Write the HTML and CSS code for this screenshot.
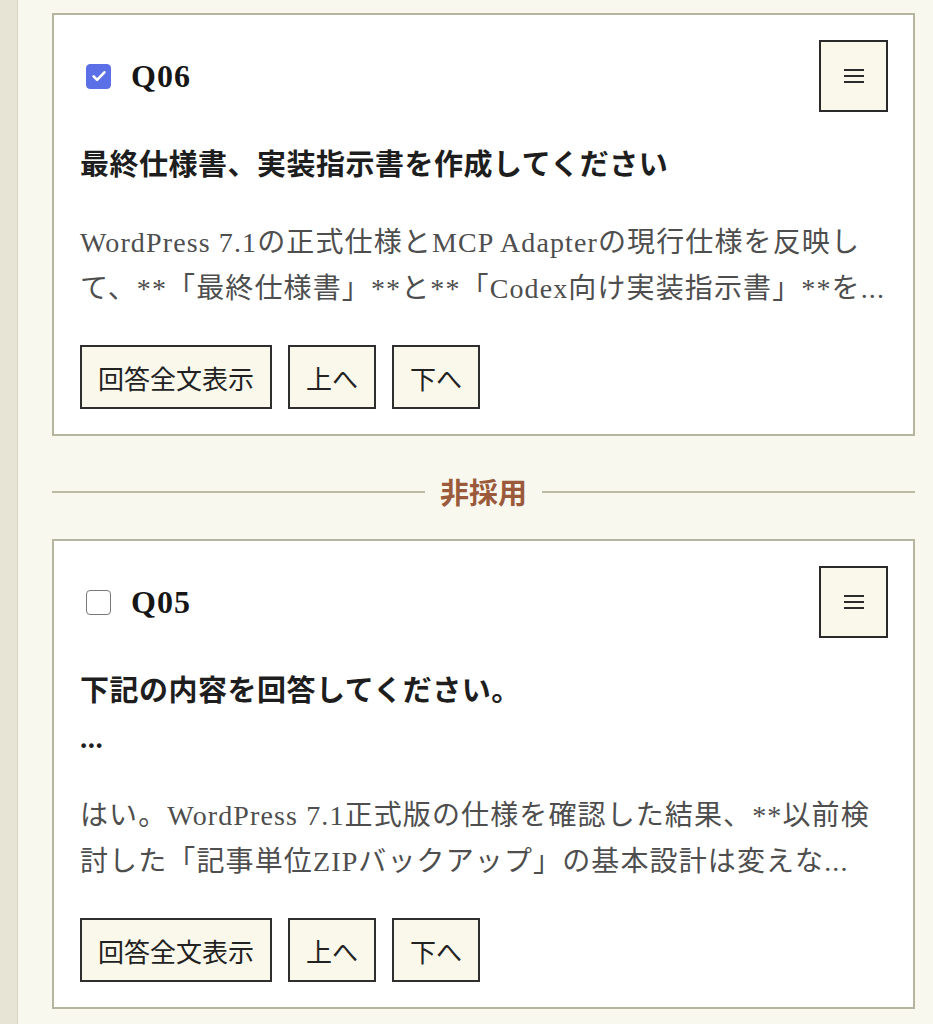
FILE: index.html
```html
<!DOCTYPE html>
<html lang="ja">
<head>
<meta charset="utf-8">
<title>質問一覧</title>
<link rel="stylesheet" href="styles.css">
</head>
<body>
<div class="layout">
  <aside class="rail"></aside>
  <main class="list">
    <article class="qa-card">
      <header class="qa-head">
        <label class="qa-id">
          <input class="pick" type="checkbox" checked>
          <span class="qa-num">Q06</span>
        </label>
        <button class="menu-btn" type="button" aria-label="メニュー">
          <svg width="20" height="14" viewBox="0 0 20 14"><path d="M0 1h20M0 7h20M0 13h20" stroke="#2b2b2b" stroke-width="2" fill="none"/></svg>
        </button>
      </header>
      <h2 class="qa-title">最終仕様書、実装指示書を作成してください</h2>
      <p class="qa-excerpt">WordPress 7.1の正式仕様とMCP Adapterの現行仕様を反映し<br>て、**「最終仕様書」**と**「Codex向け実装指示書」**を...</p>
      <div class="qa-actions">
        <button class="act" type="button">回答全文表示</button>
        <button class="act" type="button">上へ</button>
        <button class="act" type="button">下へ</button>
      </div>
    </article>

    <div class="divider"><span>非採用</span></div>

    <article class="qa-card">
      <header class="qa-head">
        <label class="qa-id">
          <input class="pick" type="checkbox">
          <span class="qa-num">Q05</span>
        </label>
        <button class="menu-btn" type="button" aria-label="メニュー">
          <svg width="20" height="14" viewBox="0 0 20 14"><path d="M0 1h20M0 7h20M0 13h20" stroke="#2b2b2b" stroke-width="2" fill="none"/></svg>
        </button>
      </header>
      <h2 class="qa-title">下記の内容を回答してください。<br>...</h2>
      <p class="qa-excerpt">はい。WordPress 7.1正式版の仕様を確認した結果、**以前検<br>討した「記事単位ZIPバックアップ」の基本設計は変えな...</p>
      <div class="qa-actions">
        <button class="act" type="button">回答全文表示</button>
        <button class="act" type="button">上へ</button>
        <button class="act" type="button">下へ</button>
      </div>
    </article>
  </main>
</div>
</body>
</html>
```

FILE: styles.css
```css
* {
  box-sizing: border-box;
}

html, body {
  margin: 0;
  padding: 0;
}

body {
  background: #f9f8ee;
  font-family: "Liberation Serif", "Noto Sans CJK JP", serif;
  color: #1c1c1c;
}

.layout {
  display: flex;
  min-height: 1024px;
}

.rail {
  flex: 0 0 18px;
  background: #e8e4d5;
  border-right: 1px solid #d8d4c1;
}

.list {
  flex: 1;
  min-width: 0;
  padding: 13px 18px 0 34px;
}

.qa-card {
  background: #fff;
  border: 2px solid #b6b59f;
  padding: 25px 25px 25px 26px;
  display: flex;
  flex-direction: column;
}

.qa-head {
  display: flex;
  align-items: center;
  justify-content: space-between;
}

.qa-id {
  display: flex;
  align-items: center;
  gap: 20px;
}

.pick {
  appearance: none;
  -webkit-appearance: none;
  width: 25px;
  height: 25px;
  margin: 0 0 0 6px;
  border: 1.5px solid #787878;
  border-radius: 4px;
  background: #fff;
}

.pick:checked {
  border-color: #5b6fe6;
  background: #5b6fe6 url("data:image/svg+xml,%3Csvg xmlns='http://www.w3.org/2000/svg' viewBox='0 0 16 16'%3E%3Cpath d='M3.2 8.4l3.1 3.1 6.5-6.8' fill='none' stroke='white' stroke-width='2.3' stroke-linecap='round' stroke-linejoin='round'/%3E%3C/svg%3E") center / 18px no-repeat;
}

.qa-num {
  font-size: 32px;
  font-weight: 700;
  letter-spacing: 1px;
  color: #161616;
  line-height: 1;
}

.menu-btn {
  width: 69px;
  height: 72px;
  border: 2px solid #2a2a2a;
  background: #faf8eb;
  padding: 0;
  display: flex;
  align-items: center;
  justify-content: center;
}

.qa-title {
  margin: 30px 0 0;
  font-size: 29px;
  font-weight: 700;
  line-height: 47px;
  letter-spacing: 0.5px;
  color: #1e1e1e;
}

.qa-excerpt {
  margin: 31px 0 0;
  font-size: 28px;
  line-height: 46px;
  letter-spacing: 0.04em;
  color: #4e4e4e;
  white-space: nowrap;
}

.qa-actions {
  margin-top: 33px;
  display: flex;
  gap: 16px;
}

.act {
  height: 64px;
  padding: 0 16px;
  border: 2px solid #2e2e2e;
  background: #faf8eb;
  font-family: "Noto Sans CJK JP", sans-serif;
  font-size: 26px;
  color: #222;
}

.divider {
  display: flex;
  align-items: center;
  gap: 15px;
  margin: 32px 0 24px;
  line-height: 47px;
}

.divider::before,
.divider::after {
  content: "";
  flex: 1;
  height: 2px;
  background: #bcbba6;
}

.divider span {
  font-family: "Noto Sans CJK JP", sans-serif;
  font-size: 29px;
  font-weight: 700;
  color: #9b5a3b;
}
```
